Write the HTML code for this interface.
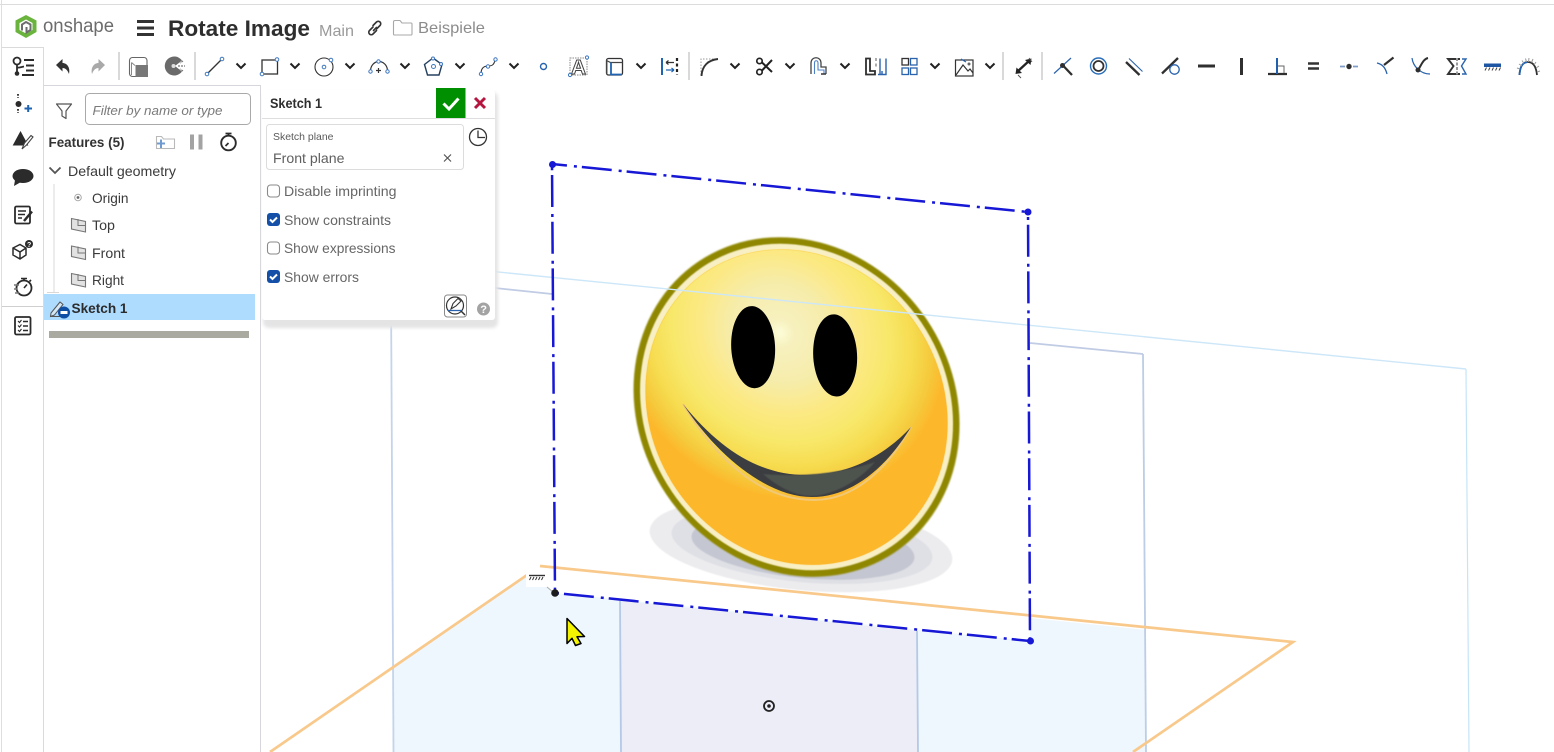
<!DOCTYPE html>
<html lang="en">
<head>
<meta charset="utf-8">
<title>Rotate Image</title>
<style>
html,body{margin:0;padding:0;background:#fff;width:1554px;height:752px;overflow:hidden}
svg{display:block;position:absolute;left:0;top:0}
text{font-family:"Liberation Sans",sans-serif}
.d{stroke:#2f2f2f;fill:none}
.b{stroke:#2a63ad;fill:none}
.c{stroke:#222;stroke-width:2;fill:none}
.pb{fill:#fff;stroke:#3f78c0;stroke-width:1}
</style>
</head>
<body>
<svg width="1554" height="752" viewBox="0 0 1554 752" xmlns="http://www.w3.org/2000/svg">
<defs>
<radialGradient id="face" gradientUnits="userSpaceOnUse" cx="227" cy="146" r="166">
<stop offset="0" stop-color="#fcfdd8"/>
<stop offset=".08" stop-color="#f7f1bf"/>
<stop offset=".3" stop-color="#f6ecaa"/>
<stop offset=".48" stop-color="#fce985"/>
<stop offset=".65" stop-color="#f8e86b"/>
<stop offset=".8" stop-color="#f7dc50"/>
<stop offset=".91" stop-color="#f5ca3c"/>
<stop offset="1" stop-color="#fdb72b"/>
</radialGradient>
<filter id="bl1"><feGaussianBlur stdDeviation=".9"/></filter>
<filter id="bl2"><feGaussianBlur stdDeviation=".5"/></filter>
<filter id="bl3" x="-5%" y="-5%" width="110%" height="110%"><feGaussianBlur stdDeviation="1.500"/></filter>
</defs>

<!-- viewport -->
<g>
<polygon points="393,667 527,575 545,585 555,593 1030,641 1030,618 1146,630 1146,752 393,752" fill="#eef6fe"/>
<polygon points="620,601 917,631 918,752 621,752" fill="#ecedf7"/>
<g fill="none" stroke-width="1.800">
<path d="M391 290L393.500 752" stroke="#c3d4ec"/>
<path d="M620 601L621 752M917 631L918 752" stroke="#b4c9e5"/>
<path d="M1143 354L1146 752" stroke="#bccde6"/>
<path d="M495 288L552 294M1030 343L1143 354" stroke="#c0cbe4"/>
<path d="M1466 369L1469 752" stroke="#c5e5f7" stroke-width="1.200"/>
</g>
<!-- image -->
<polygon points="552,164 1028,212 1030,641 555,593" fill="#fff"/>
<g filter="url(#bl2)">
<ellipse cx="801" cy="545" rx="152" ry="45" transform="rotate(5.7 801 545)" fill="#ececee"/>
<ellipse cx="802" cy="545" rx="131" ry="37" transform="rotate(5.7 802 545)" fill="#dfe0e5"/>
<ellipse cx="803" cy="547" rx="112" ry="31" transform="rotate(5.7 803 547)" fill="#c4c6d2"/>
</g>
<g transform="matrix(1,.1008,.007,1,552,164)">
<ellipse cx="243" cy="218.500" rx="163" ry="169" fill="#8f8700" filter="url(#bl1)"/>
<ellipse cx="243" cy="218.500" rx="156.500" ry="162.500" fill="#f8efc4" filter="url(#bl2)"/>
<ellipse cx="243" cy="218.500" rx="151" ry="157" fill="#fdb72b"/>
<ellipse cx="243" cy="218.500" rx="151" ry="157" fill="url(#face)" filter="url(#bl2)"/>
<ellipse cx="200" cy="163" rx="22" ry="41" fill="#000"/>
<ellipse cx="282" cy="163" rx="22" ry="41" fill="#000"/>
</g>
<path d="M683 404C718 462 762 500 814 500C855 500 888 468 911 427" fill="none" stroke="#f1c878" stroke-width="2"/>
<path d="M683 404C720 450 760 475 806 475C850 475 885 455 911 427C885 470 850 497 812 497C770 497 720 460 683 404Z" fill="#3b3d40"/>
<path d="M763 474C785 476 830 477 875 462C860 480 835 495 812 496C795 496 778 487 763 474Z" fill="#4d524e" filter="url(#bl2)"/>
<path d="M495 271.700L1466 369" fill="none" stroke="#cde7f8" stroke-width="1.400"/>
<!-- orange -->
<path d="M270 752L527 575M540 566L1293 642L1133 752" fill="none" stroke="#f8c98b" stroke-width="2.700"/>
<!-- ground label -->
<rect x="526" y="572" width="22" height="15" fill="#fff"/>
<path d="M529 575.500H545" stroke="#333" stroke-width="1.400"/>
<path d="M531 577l-1.500 3M534 577l-1.500 3M537 577l-1.500 3M540 577l-1.500 3M543 577l-1.500 3" stroke="#333" stroke-width="1"/>
<path d="M547 587L553 592" stroke="#aaa" stroke-width="1"/>
<!-- blue dash-dot -->
<g fill="none" stroke="#1717d6" stroke-width="2.500">
<path d="M552 164L1028 212" stroke-dasharray="30 7 3 5" stroke-dashoffset="15"/>
<path d="M1028 212L1030 641" stroke-dasharray="32 7 3 4.700" stroke-dashoffset="34"/>
<path d="M552 164L555 593" stroke-dasharray="32 7 3 4.700" stroke-dashoffset="-11"/>
<path d="M555 593L1030 641" stroke-dasharray="30 7 3 5" stroke-dashoffset="-9"/>
</g>
<circle cx="552.500" cy="164.500" r="3.500" fill="#1717d6"/>
<circle cx="1028" cy="212" r="3.500" fill="#1717d6"/>
<circle cx="1030.500" cy="641" r="3.500" fill="#1717d6"/>
<circle cx="555" cy="593" r="3.800" fill="#1c1c1c"/>
<!-- origin -->
<circle cx="769" cy="706" r="5" fill="none" stroke="#222" stroke-width="1.800"/>
<circle cx="769" cy="706" r="1.800" fill="#222"/>
<!-- cursor -->
<path d="M567 618.500L584.500 636.500L577 636.800L581 643.500L575.500 645.500L572 638.300L567 643.500Z" fill="#f4f400" stroke="#000" stroke-width="1.500" stroke-linejoin="round"/>
</g>

<!-- chrome borders -->
<rect x="0" y="0" width="1554" height="46" fill="#fff"/>
<rect x="0" y="46" width="1554" height="40" fill="#fff"/>
<rect x="0" y="86" width="261" height="666" fill="#fff"/>
<path d="M0 4.500H1554" stroke="#dcdcdc" stroke-width="1"/>
<path d="M1.500 0V752" stroke="#dedede" stroke-width="1"/>
<path d="M2 47.500H43.500V752" fill="none" stroke="#dadada" stroke-width="1"/>
<path d="M44 85.500H260.500V752" fill="none" stroke="#d6d6dc" stroke-width="1"/>
<path d="M2 306.500H43" stroke="#cfcfcf" stroke-width="1"/>

<!-- header -->
<g>
<polygon points="26,15 36.500,20.500 36.500,32 26,38 15.500,32 15.500,20.500" fill="#6ab43e"/>
<polygon points="26,19.500 32.500,23 32.500,30 26,33.500 19.500,30 19.500,23" fill="#fff"/>
<path d="M22 30.500V24.500L26 22L30.500 24.500V30L26.500 32.500V27" fill="none" stroke="#6d6d6d" stroke-width="2"/>
<text x="43" y="32" font-size="19" fill="#6c6c6c" textLength="71" lengthAdjust="spacingAndGlyphs">onshape</text>
<path d="M137 21.500H154M137 28H154M137 34.500H154" stroke="#333" stroke-width="3"/>
<text x="168" y="36" font-size="22" font-weight="700" fill="#2e2e2e" textLength="142" lengthAdjust="spacingAndGlyphs">Rotate Image</text>
<text x="319" y="36" font-size="16" fill="#9a9a9a" textLength="35" lengthAdjust="spacingAndGlyphs">Main</text>
<g fill="none" stroke="#333" stroke-width="1.600" stroke-linecap="round">
<path d="M373 27l-3.500 3.500a2.400 2.400 0 0 0 3.500 3.500l3.500 -3.500"/>
<path d="M376.500 29l3.500 -3.500a2.400 2.400 0 0 0 -3.500 -3.500l-3.500 3.500"/>
<path d="M373.500 30.500l3 -3"/>
</g>
<path d="M393.500 22a1.500 1.500 0 0 1 1.500 -1.500h5l2 2.500h9a.9.9 0 0 1 1 1v10a.9.9 0 0 1 -1 1h-16.500a1 1 0 0 1 -1 -1Z" fill="none" stroke="#a8a8a8" stroke-width="1.100"/>
<text x="418" y="33" font-size="16" fill="#8c8c8c" textLength="67" lengthAdjust="spacingAndGlyphs">Beispiele</text>
</g>

<!-- toolbar -->
<g>
<!-- tab icon -->
<circle cx="17" cy="61" r="3.500" fill="none" stroke="#2b2b2b" stroke-width="1.800"/>
<circle cx="17" cy="73.500" r="2.300" fill="#2b2b2b"/>
<path d="M17 64.500V72M17 67.500C19 68 21 67 24 66.500" fill="none" stroke="#2b2b2b" stroke-width="1.800"/>
<path d="M24 60H34M26 65.500H34M26 70.500H34M22 75H34" stroke="#2b2b2b" stroke-width="2"/>
<!-- undo redo -->
<path d="M56 65L62.500 59V63C67 63 70.500 67.500 69 74C67.500 70 65.500 68 62.500 68V71.500Z" fill="#333"/>
<path d="M105 65L98.500 59V63C94 63 90.500 67.500 92 74C93.500 70 95.500 68 98.500 68V71.500Z" fill="#a9a9a9"/>
<path d="M119 52V80M195 52V80M689 52V80M1003 52V80M1042 52V80" stroke="#d9d9d9" stroke-width="2"/>
<!-- part studio -->
<rect x="129.500" y="57.500" width="17.500" height="19" rx="3" fill="#fff" stroke="#666" stroke-width="1.100"/>
<path d="M131.500 62.500L135 65.500M131.500 62.500V75" stroke="#888" stroke-width="1" fill="none"/>
<rect x="135.500" y="65" width="12.500" height="12" fill="#777"/>
<!-- pacman gear -->
<path d="M182 60.500A9.500 9.500 0 1 0 182 71.500L175 66Z" fill="#6a6a6a"/>
<circle cx="173.500" cy="66" r="2" fill="#ddd"/>
<path d="M178 66H185M183 61L180 63M183 71L180 69" stroke="#777" stroke-width="1.200" stroke-dasharray="2 1" fill="none"/>
<!-- line -->
<path d="M208 73L221 60" stroke="#333" stroke-width="1.300"/>
<circle class="pb" cx="207" cy="74" r="1.800"/><circle class="pb" cx="222" cy="59" r="1.800"/>
<path class="c" d="M236.500 63.500l4.500 4.500l4.500 -4.500"/>
<!-- rect -->
<rect x="262" y="60" width="15.500" height="14" fill="none" stroke="#333" stroke-width="1.300"/>
<circle class="pb" cx="262" cy="74" r="1.800"/><circle class="pb" cx="277" cy="59.500" r="1.800"/>
<path class="c" d="M290.500 63.500l4.500 4.500l4.500 -4.500"/>
<!-- circle -->
<circle cx="324" cy="67" r="9" fill="none" stroke="#333" stroke-width="1.100"/>
<circle cx="324" cy="67" r="1.800" class="pb"/><circle cx="331" cy="60" r="1.800" class="pb"/>
<path class="c" d="M345.500 63.500l4.500 4.500l4.500 -4.500"/>
<!-- arc -->
<path d="M370.500 71A8.500 9.500 0 0 1 387.500 71" fill="none" stroke="#333" stroke-width="1.200"/>
<path d="M376 70.500H381M378.500 68V73" stroke="#333" stroke-width="1.200"/>
<circle class="pb" cx="370.500" cy="71.500" r="1.700"/><circle class="pb" cx="387.500" cy="71.500" r="1.700"/><circle class="pb" cx="378.500" cy="61.500" r="1.700"/>
<path class="c" d="M400.500 63.500l4.500 4.500l4.500 -4.500"/>
<!-- polygon -->
<polygon points="433,58 442,64.500 439,75 427.500,75 424.500,64.500" fill="none" stroke="#25405f" stroke-width="1.400"/>
<circle cx="433.500" cy="66.500" r="2" class="pb"/><circle cx="433" cy="58.500" r="1.500" class="pb"/><circle cx="441" cy="64" r="1.500" class="pb"/>
<path class="c" d="M455.500 63.500l4.500 4.500l4.500 -4.500"/>
<!-- spline -->
<path d="M481 74C481 67 485 66 488 66C492 66 494 65 495 60" fill="none" stroke="#333" stroke-width="1.100"/>
<circle class="pb" cx="481" cy="74" r="1.700"/><circle class="pb" cx="488" cy="66.500" r="1.700"/><circle class="pb" cx="495.500" cy="59.500" r="1.700"/>
<path class="c" d="M509.500 63.500l4.500 4.500l4.500 -4.500"/>
<!-- point -->
<circle cx="543.500" cy="66.500" r="3" fill="none" stroke="#2a63ad" stroke-width="1.400"/>
<!-- text -->
<rect x="570" y="58" width="17" height="17" fill="none" stroke="#888" stroke-width="1" stroke-dasharray="1.500 1"/>
<text x="571" y="74" font-size="20" fill="#fff" stroke="#444" stroke-width="1" font-weight="700" textLength="15" lengthAdjust="spacingAndGlyphs">A</text>
<circle class="pb" cx="570" cy="75" r="1.600"/><circle class="pb" cx="587" cy="57.500" r="1.600"/>
<!-- offset -->
<rect x="606.500" y="58.500" width="16" height="16.500" rx="2" fill="none" stroke="#333" stroke-width="1.300"/>
<path d="M606.500 60.500L610.500 62.500H622.500" fill="none" stroke="#444" stroke-width="1.200"/>
<path d="M611 62.500V74.500H622" fill="none" stroke="#1f63b3" stroke-width="1.800"/>
<path d="M607 74V60" stroke="#555" stroke-width="1"/>
<path class="c" d="M636.500 63.500l4.500 4.500l4.500 -4.500"/>
<!-- transform -->
<path d="M662 58V75" stroke="#1f63b3" stroke-width="2"/>
<path d="M677 58V75" stroke="#222" stroke-width="2.200" stroke-dasharray="3 2.500"/>
<path d="M666 62.500H674M666 62.500l2.500 -2M666 62.500l2.500 2" fill="none" stroke="#333" stroke-width="1.200"/>
<path d="M666 70H674M674 70l-2.500 -2M674 70l-2.500 2" fill="none" stroke="#1f63b3" stroke-width="1.200"/>
<!-- fillet -->
<path d="M701 75V59H718" fill="none" stroke="#999" stroke-width="1" stroke-dasharray="1.500 1.500"/>
<path d="M701.500 76C702 66 708 60 718 59" fill="none" stroke="#333" stroke-width="1.900"/>
<path class="c" d="M730.500 63.500l4.500 4.500l4.500 -4.500"/>
<!-- scissors -->
<circle cx="759.500" cy="61" r="2.700" fill="none" stroke="#222" stroke-width="1.700"/>
<circle cx="759.500" cy="72" r="2.700" fill="none" stroke="#222" stroke-width="1.700"/>
<path d="M762 62.500L772 72M762 70.500L772 60" stroke="#222" stroke-width="2"/>
<path class="c" d="M785.500 63.500l4.500 4.500l4.500 -4.500"/>
<!-- extend -->
<path d="M811 74V63C811 56 821 56 821 63V67H826V74" fill="none" stroke="#444" stroke-width="1.300"/>
<path d="M814.500 74V63C814.500 60 818 60 818 63V70H824V74" fill="none" stroke="#4e82c5" stroke-width="1.100"/>
<path d="M821 74H826" stroke="#333" stroke-width="1.500"/>
<path class="c" d="M840.500 63.500l4.500 4.500l4.500 -4.500"/>
<!-- mirror -->
<path d="M866 58.500V74.500H875V71H870V58.500Z" fill="none" stroke="#2f2f2f" stroke-width="1.800"/>
<path d="M876 58V61M876 63.500V66.500" stroke="#777" stroke-width="1.200"/>
<path d="M880 58.500V74.500H882V71M886 58.500V74.500H878" fill="none" stroke="#2a63ad" stroke-width="1.400"/>
<!-- pattern -->
<rect x="902" y="58.500" width="6.500" height="6.500" fill="none" stroke="#333" stroke-width="1.300"/>
<g fill="none" stroke="#2a63ad" stroke-width="1.300"><rect x="910.500" y="58.500" width="6.500" height="6.500"/><rect x="902" y="68" width="6.500" height="6.500"/><rect x="910.500" y="68" width="6.500" height="6.500"/></g>
<path class="c" d="M930.500 63.500l4.500 4.500l4.500 -4.500"/>
<!-- image -->
<rect x="955.500" y="60" width="17.500" height="16" fill="none" stroke="#333" stroke-width="1.200"/>
<path d="M956 75L963 65L968 71L970 69L973 73" fill="none" stroke="#333" stroke-width="1.200"/>
<path d="M961 59L966 62" stroke="#2a63ad" stroke-width="1.300"/>
<circle cx="969" cy="64" r="1.500" fill="#666"/>
<path class="c" d="M985.500 63.500l4.500 4.500l4.500 -4.500"/>
<!-- dimension -->
<path d="M1017 72L1030 60" stroke="#222" stroke-width="2.300"/>
<path d="M1015.500 74L1016.500 67.500L1022 73ZM1031.500 58.500L1030.500 65L1025 60Z" fill="#222"/>
<path d="M1018 75L1021 78M1029 58L1032 62" stroke="#555" stroke-width="1"/>
<!-- coincident -->
<path d="M1054 73.500L1071 58" stroke="#2a63ad" stroke-width="1.200"/>
<path d="M1063 65.500L1072 75" stroke="#2f2f2f" stroke-width="2.300"/>
<circle cx="1062.500" cy="65.500" r="2.500" fill="#2f2f2f"/>
<!-- concentric -->
<circle cx="1098.500" cy="66" r="8" fill="none" stroke="#2a6db8" stroke-width="1.400"/>
<circle cx="1098.500" cy="66" r="5" fill="none" stroke="#333" stroke-width="1.800"/>
<!-- parallel -->
<path d="M1126 62L1139.500 75" stroke="#2f2f2f" stroke-width="2.300"/>
<path d="M1129 58.500L1142.500 71.500" stroke="#2a63ad" stroke-width="1.100"/>
<!-- tangent -->
<path d="M1162 73.500L1178 58" stroke="#2f2f2f" stroke-width="2.300"/>
<circle cx="1174.500" cy="69.500" r="4.700" fill="none" stroke="#2a63ad" stroke-width="1.300"/>
<!-- horizontal vertical -->
<path d="M1198 66H1215" stroke="#2f2f2f" stroke-width="3"/>
<path d="M1241.500 58V75" stroke="#2f2f2f" stroke-width="3"/>
<!-- perpendicular -->
<path d="M1268 74H1287" stroke="#2f2f2f" stroke-width="2.200"/>
<path d="M1277 58V74" stroke="#1f5fae" stroke-width="2"/>
<path d="M1278 66H1284V73" fill="none" stroke="#666" stroke-width="1"/>
<!-- equal -->
<path d="M1308 63.500H1319M1308 68.500H1319" stroke="#333" stroke-width="2.500"/>
<!-- midpoint -->
<path d="M1340 66.500H1345M1353 66.500H1358" stroke="#7f9cc9" stroke-width="1.700"/>
<circle cx="1349" cy="66.500" r="2.700" fill="#2f2f2f"/>
<!-- normal -->
<path d="M1384 65L1393.500 57.500" stroke="#2f2f2f" stroke-width="2.100"/>
<path d="M1377 63C1381 64 1385 66 1387 74" fill="none" stroke="#2a63ad" stroke-width="1.300"/>
<!-- pierce -->
<path d="M1412 58C1413 66 1420 74 1430 74" fill="none" stroke="#2a63ad" stroke-width="1.200"/>
<path d="M1418 70C1421 66 1423 59 1428 58" fill="none" stroke="#2f2f2f" stroke-width="2"/>
<circle cx="1418" cy="70" r="2.500" fill="#2f2f2f"/>
<!-- symmetric -->
<path d="M1460 59H1448L1453.500 66L1448 74H1460" fill="none" stroke="#333" stroke-width="1.900"/>
<path d="M1457 58V75" stroke="#999" stroke-width="2" stroke-dasharray="3 1.500"/>
<path d="M1462 59H1466L1461.500 66L1466 74H1462" fill="none" stroke="#2a63ad" stroke-width="1.400"/>
<!-- fix -->
<rect x="1484" y="63.500" width="17" height="3.500" fill="#1f56a3"/>
<path d="M1486.500 67.500l-1.500 3M1490 67.500l-1.500 3M1493.500 67.500l-1.500 3M1497 67.500l-1.500 3M1500.500 67.500l-1.500 3" stroke="#444" stroke-width="1"/>
<!-- curvature -->
<path d="M1519.500 75C1520 65 1524 62 1528 62C1532 62 1536 65 1537 75" fill="none" stroke="#2f2f2f" stroke-width="1.800"/>
<path d="M1519.500 75C1520 65 1524 62 1528 62" fill="none" stroke="#1f63b3" stroke-width="1.800"/>
<path d="M1517 68l3 1M1519 64l3 2M1522 60.500l2 3M1525.500 58.500l1 3.500M1529 58l-.5 4M1533 59l-1.500 3.500M1536 62l-2 3M1539 66l-3 2M1540 71l-3 1" stroke="#999" stroke-width="1"/>
</g>

<!-- left rail icons -->
<g>
<path d="M18 94V98M18 109V113" stroke="#2b2b2b" stroke-width="1.800" stroke-dasharray="1.800 1.400"/>
<circle cx="18.500" cy="104" r="3" fill="#2b2b2b"/>
<path d="M24.500 108.500H32M28.200 105V112" stroke="#1f63b3" stroke-width="2"/>
<path d="M20.500 132L27.500 145H13.500Z" fill="#2b2b2b" stroke="#2b2b2b"/>
<path d="M22 149L24.500 143L31 135.500L33 137L26.500 145Z" fill="#fff" stroke="#444" stroke-width="1.100"/>
<ellipse cx="23" cy="176" rx="10.500" ry="7" fill="#2b2b2b"/>
<path d="M15 180L14 186L21 182Z" fill="#2b2b2b"/>
<rect x="15" y="206.500" width="15" height="17" rx="1.500" fill="#fff" stroke="#2b2b2b" stroke-width="1.800"/>
<path d="M18 211H26M18 214.500H25M18 218H22" stroke="#2b2b2b" stroke-width="1.400"/>
<path d="M24 221L32 211.500" stroke="#2b2b2b" stroke-width="2.500"/>
<path d="M13 248L20 244.500L26 248V255L20 259L13 255Z M13 248L20 252L26 248M20 252V259" fill="none" stroke="#2b2b2b" stroke-width="1.500"/>
<circle cx="29" cy="244" r="4" fill="#2b2b2b"/>
<text x="27" y="247" font-size="7" font-weight="700" fill="#fff">?</text>
<circle cx="24" cy="288" r="7.500" fill="none" stroke="#2b2b2b" stroke-width="1.800"/>
<path d="M24 279V281M21 278.500H27M24 288L27 284.500M29.500 281.500L31 280" stroke="#2b2b2b" stroke-width="1.600"/>
<path d="M14 285H19M14 289H17M15 293H19" stroke="#777" stroke-width="1.400"/>
<rect x="15" y="317" width="15.500" height="17.500" rx="1.500" fill="none" stroke="#2b2b2b" stroke-width="1.800"/>
<path d="M18 321l1.500 1.500l2 -2.500M18 325.500l1.500 1.500l2 -2.500M18 330l1.500 1.500l2 -2.500" fill="none" stroke="#2b2b2b" stroke-width="1.100"/>
<path d="M23 321.500H28M23 326H28M23 330.500H28" stroke="#2b2b2b" stroke-width="1.400"/>
</g>

<!-- feature panel -->
<g>
<path d="M56.500 104H71.500L66 111V118.500L62 116V111Z" fill="none" stroke="#555" stroke-width="1.200" stroke-linejoin="round"/>
<rect x="85.500" y="93.500" width="165" height="31" rx="4" fill="#fff" stroke="#a9a9a9"/>
<text x="92.500" y="115" font-size="13" font-style="italic" fill="#7a7a7a" textLength="130" lengthAdjust="spacingAndGlyphs">Filter by name or type</text>
<text x="48.500" y="147" font-size="14" font-weight="700" fill="#333" textLength="76" lengthAdjust="spacingAndGlyphs">Features (5)</text>
<path d="M156.500 136.500H161.500L163.500 139H174.500V148.500H156.500Z" fill="none" stroke="#b9b9b9" stroke-width="1.100"/>
<path d="M157 143.500H165M161 139.500V148" stroke="#6f9bd0" stroke-width="2"/>
<rect x="190" y="134.500" width="4" height="15" fill="#a3a3a3"/><rect x="198.500" y="134.500" width="4" height="15" fill="#a3a3a3"/>
<circle cx="228.500" cy="143" r="7.300" fill="none" stroke="#2b2b2b" stroke-width="1.900"/>
<path d="M225.500 133.500H231.500M228.500 133.500V136M228.500 143L225.500 146" fill="none" stroke="#2b2b2b" stroke-width="1.700"/>
<path d="M49.500 167.500L55 173L60.500 167.500" fill="none" stroke="#555" stroke-width="1.800"/>
<text x="68" y="176" font-size="14" fill="#3a3a3a" textLength="108" lengthAdjust="spacingAndGlyphs">Default geometry</text>
<path d="M54 184V293M47 292.500H59" fill="none" stroke="#d8d8d8" stroke-width="1"/>
<circle cx="78" cy="197.500" r="3.300" fill="none" stroke="#a9a9a9" stroke-width="1"/>
<circle cx="78" cy="197.500" r="1.400" fill="#666"/>
<text x="92" y="203" font-size="14" fill="#3a3a3a" textLength="36.500" lengthAdjust="spacingAndGlyphs">Origin</text>
<g fill="#e2e2e2" stroke="#777" stroke-width="1.100">
<path d="M71.500 218.500L85.500 221.500V232L71.500 229Z"/><path d="M71.500 246L85.500 249V259.500L71.500 256.500Z"/><path d="M71.500 273.500L85.500 276.500V287L71.500 284Z"/>
</g>
<g fill="none" stroke="#777" stroke-width="1"><path d="M78 219V225.500H85.500"/><path d="M78 246.500V253H85.500"/><path d="M78 274V280.500H85.500"/></g>
<text x="92" y="230" font-size="14" fill="#3a3a3a" textLength="23" lengthAdjust="spacingAndGlyphs">Top</text>
<text x="92" y="258" font-size="14" fill="#3a3a3a" textLength="33" lengthAdjust="spacingAndGlyphs">Front</text>
<text x="92" y="285" font-size="14" fill="#3a3a3a" textLength="32" lengthAdjust="spacingAndGlyphs">Right</text>
<rect x="44" y="294" width="211" height="26" fill="#aedcff"/>
<path d="M51 313L60 302L63 304.500L54.500 315L50.500 316.500ZM50 316.500H60" fill="#d5e8f5" stroke="#555" stroke-width="1"/>
<circle cx="64" cy="312.500" r="6" fill="#0f4fa3"/>
<rect x="60.500" y="311" width="7" height="3" fill="#fff"/>
<text x="71.500" y="313" font-size="14" font-weight="700" fill="#2c2c2c" textLength="56" lengthAdjust="spacingAndGlyphs">Sketch 1</text>
<rect x="49" y="331" width="200" height="7" fill="#abaaa0"/>
</g>

<!-- sketch dialog -->
<g>
<rect x="263" y="92" width="235" height="236" rx="6" fill="#e4e4e4" filter="url(#bl3)"/>
<rect x="262" y="90" width="233" height="230" rx="3" fill="#fff"/>
<path d="M262 118.500H495" stroke="#dedede"/>
<text x="270" y="108" font-size="14" font-weight="700" fill="#2e2e2e" textLength="52" lengthAdjust="spacingAndGlyphs">Sketch 1</text>
<rect x="436" y="88" width="29.500" height="30" fill="#008f00"/>
<path d="M443.500 103.500L449 109L458.500 98.500" fill="none" stroke="#fff" stroke-width="3"/>
<path d="M475 98L485 108M485 98L475 108" stroke="#b5163f" stroke-width="3"/>
<rect x="266.500" y="124.500" width="197" height="45" rx="3" fill="#fff" stroke="#dcdcdc"/>
<text x="273" y="140" font-size="10.500" fill="#5a5a5a" textLength="60.500" lengthAdjust="spacingAndGlyphs">Sketch plane</text>
<text x="273" y="163" font-size="14" fill="#5f5f5f" textLength="71.500" lengthAdjust="spacingAndGlyphs">Front plane</text>
<path d="M444 154.500L451 161.500M451 154.500L444 161.500" stroke="#555" stroke-width="1.200"/>
<circle cx="478" cy="137" r="8.500" fill="none" stroke="#333" stroke-width="1.300"/>
<path d="M478 130.500V137.500H485" fill="none" stroke="#333" stroke-width="1.300"/>
<g fill="#fff" stroke="#8a8a8a" stroke-width="1.100">
<rect x="267.500" y="185" width="12" height="12" rx="3"/>
<rect x="267.500" y="242" width="12" height="12" rx="3"/>
</g>
<rect x="267" y="213" width="13" height="13" rx="3" fill="#1450a8"/>
<rect x="267" y="270" width="13" height="13" rx="3" fill="#1450a8"/>
<path d="M270 219.500L272.500 222L277 217.500M270 276.500L272.500 279L277 274.500" fill="none" stroke="#fff" stroke-width="2"/>
<text x="284" y="196" font-size="14" fill="#666" textLength="112.500" lengthAdjust="spacingAndGlyphs">Disable imprinting</text>
<text x="284" y="225" font-size="14" fill="#666" textLength="107" lengthAdjust="spacingAndGlyphs">Show constraints</text>
<text x="284" y="253" font-size="14" fill="#666" textLength="111.500" lengthAdjust="spacingAndGlyphs">Show expressions</text>
<text x="284" y="282" font-size="14" fill="#666" textLength="75" lengthAdjust="spacingAndGlyphs">Show errors</text>
<rect x="444.500" y="295" width="22" height="22" rx="3" fill="#fff" stroke="#8a8a8a"/>
<circle cx="455" cy="305.500" r="8.500" fill="none" stroke="#333" stroke-width="1.200"/>
<path d="M451 309L453 303.500L458 298.500L461 301L456 306Z" fill="#fff" stroke="#333" stroke-width="1.100"/>
<path d="M448 310.500H462" stroke="#2a63ad" stroke-width="1.300"/>
<path d="M461 311L465 315" stroke="#333" stroke-width="1.500"/>
<circle cx="483.500" cy="309" r="6.500" fill="#a3a3a3"/>
<text x="480.300" y="313" font-size="11" font-weight="700" fill="#fff">?</text>
</g>
</svg>
</body>
</html>
